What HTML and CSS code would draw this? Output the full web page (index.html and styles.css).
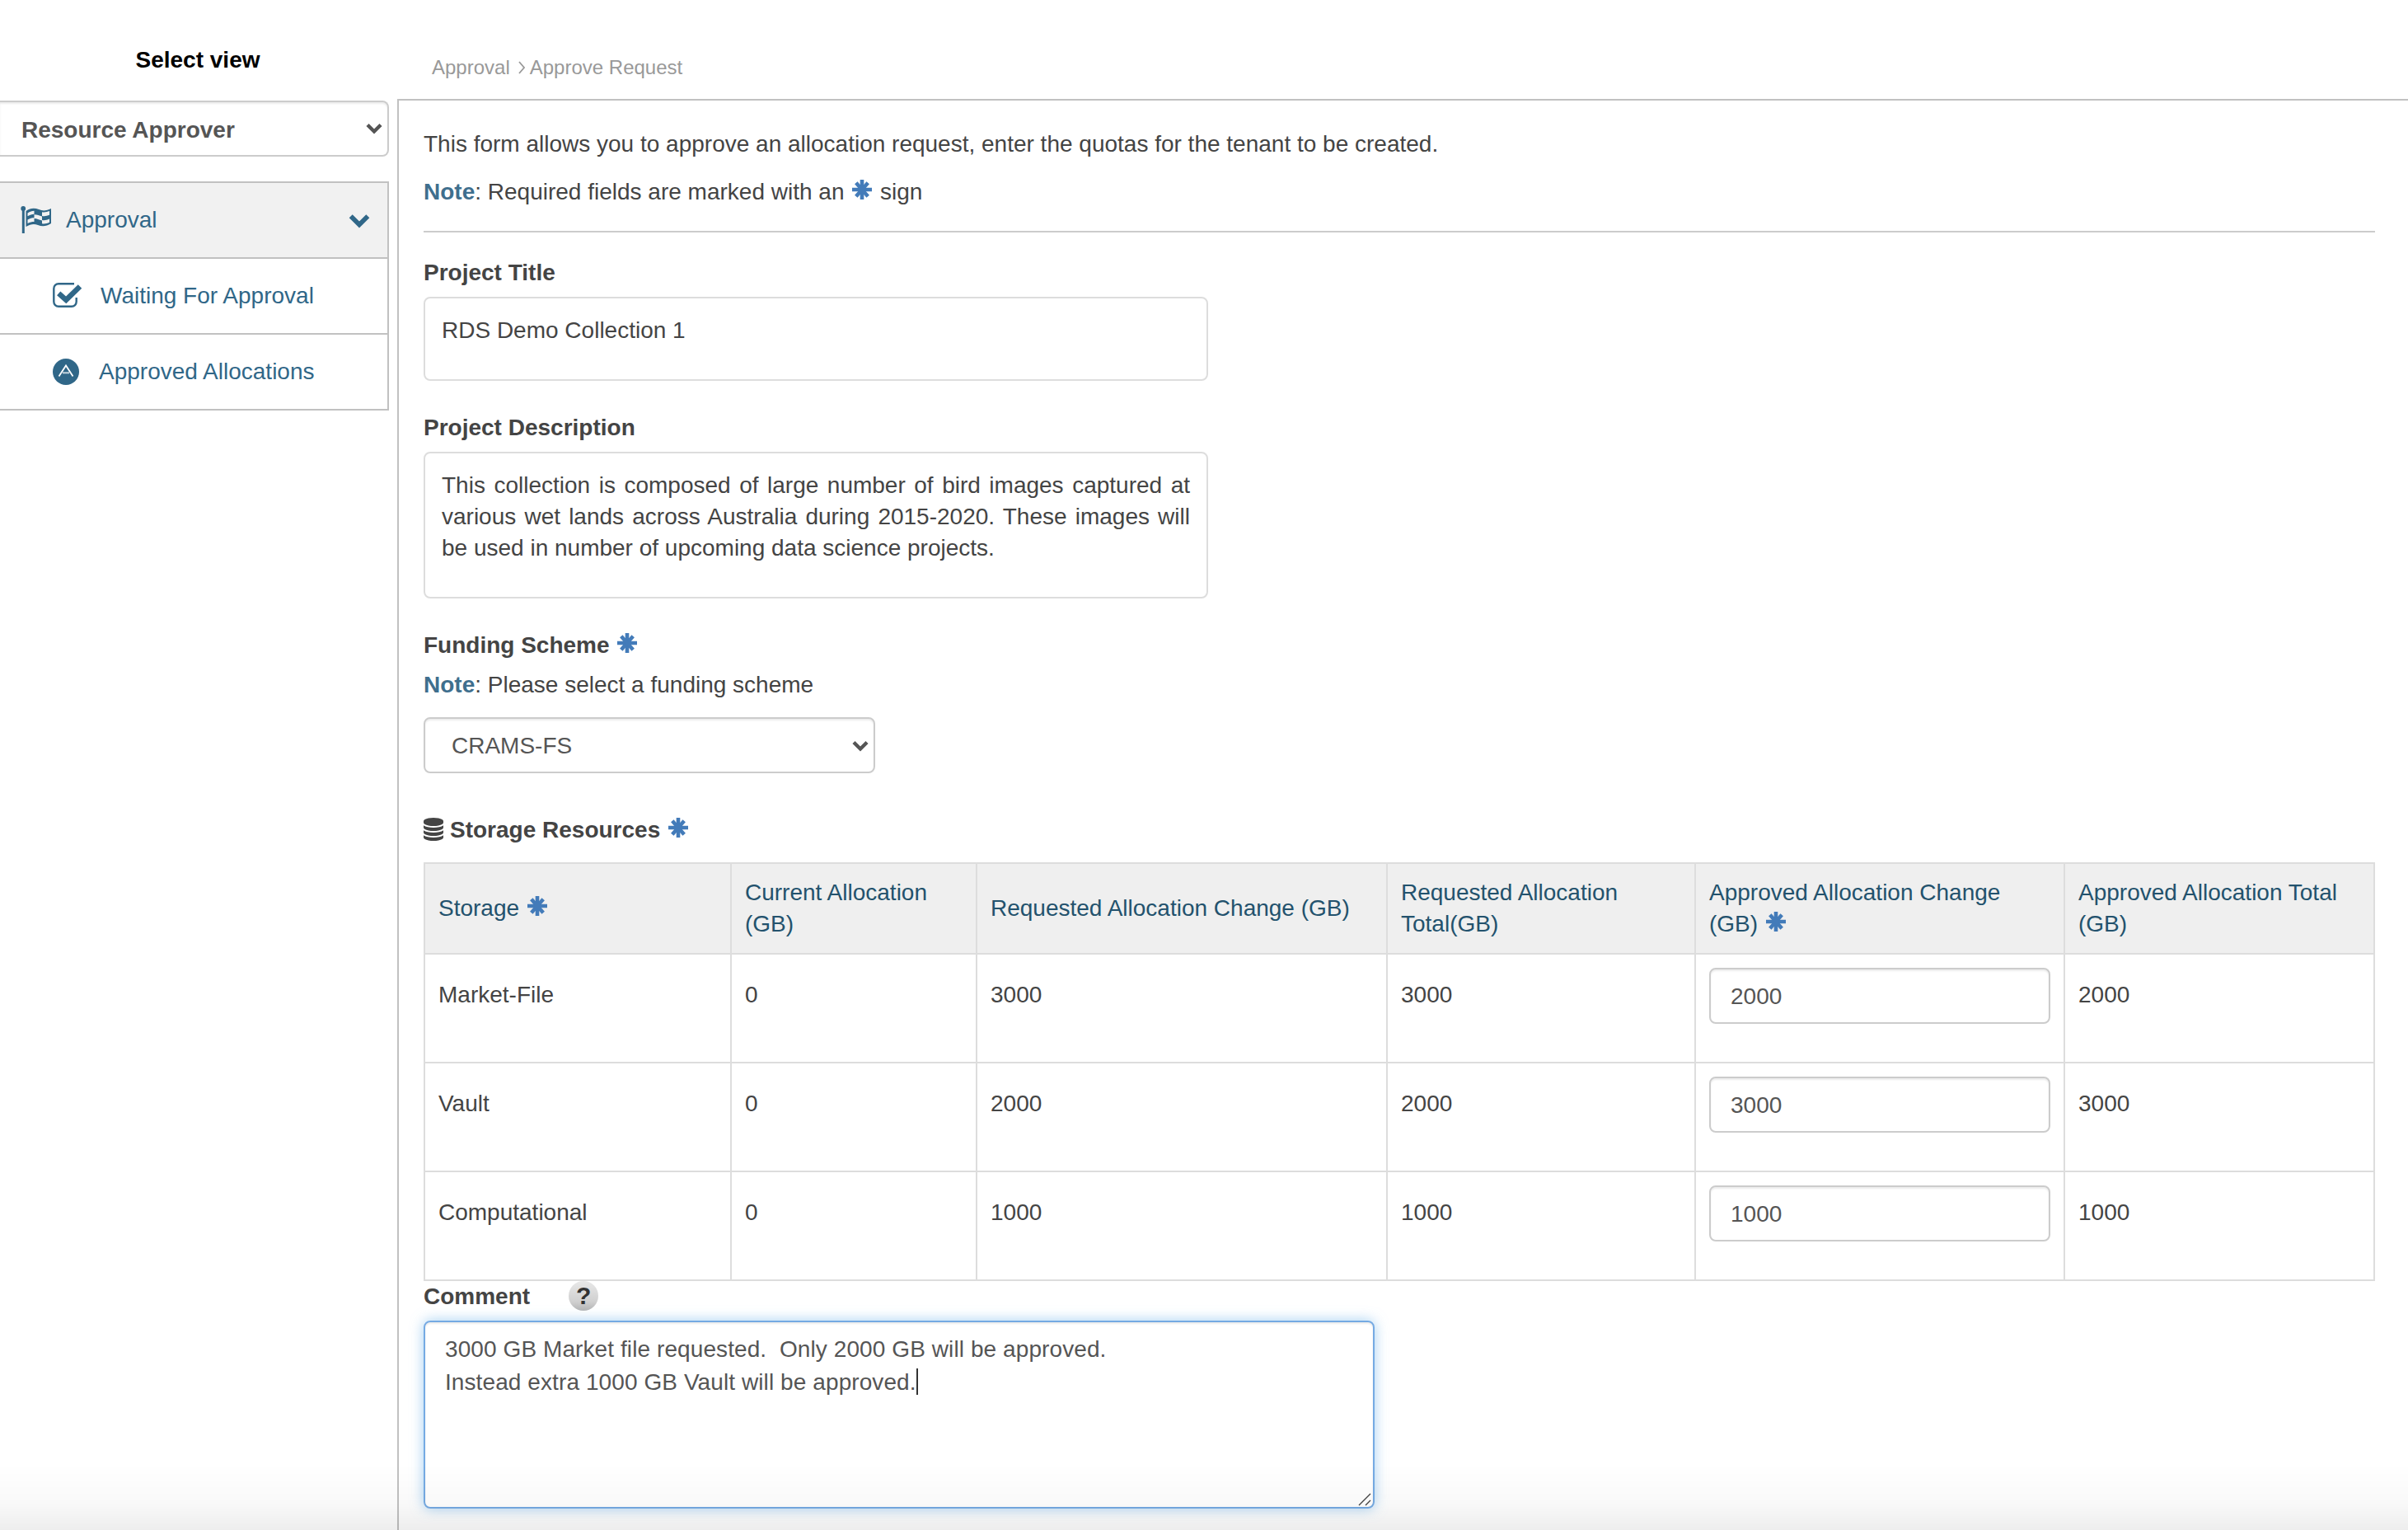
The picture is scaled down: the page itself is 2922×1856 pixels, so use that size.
FILE: index.html
```html
<!DOCTYPE html>
<html>
<head>
<meta charset="utf-8">
<title>Approve Request</title>
<link rel="stylesheet" href="styles.css">
</head>

<body>
<!-- icons -->
<svg class="defs">
	<symbol id="i-star" viewBox="0 0 24 24">
		<path d="M12 0v24M0 12h24" stroke-width="4.6"/>
		<path d="M4.800 3.800l14.400 16.400M19.200 3.800L4.800 20.200" stroke-width="4.600"/>
	</symbol>
	<symbol id="i-down" viewBox="0 0 20 14">
		<path d="M2 2.5l8 8 8-8" fill="none" stroke="currentColor" stroke-width="4.4"/>
	</symbol>
	<symbol id="i-flag" viewBox="0 0 38 34">
		<circle cx="3.2" cy="3" r="2.9"/>
		<rect x="1.8" y="3" width="3" height="30"/>
		<path d="M6.5 6C12 2 17 2 22 4c5 2 9 2 15-1v18c-6 4-11 4-16 2-5-2-9-1-14.500 2z"/>
		<path d="M8.500 8.500c3-2 5-2.700 8-2.800v4c-3 .2-5 .8-8 2.600zM16.500 10.200c4 0 6 1.500 9.500 2.300v5c-4-.8-6-2.300-9.500-2.500zM26 7.300c3 .5 6 0 9-1.300v4.800c-3 1.400-6 1.700-9 1.200zM8.500 16.500c3-1.600 5-2.200 8-2.200v4.600c-3 0-5 .6-8 2zM26 17c3 .5 6 0 9-1.500v4.300c-3 1.500-6 2-9 1.500z" fill="#f1f1f1"/>
	</symbol>
	<symbol id="i-check" viewBox="0 0 36 30">
		<path d="M26 1.300H7A5.700 5.700 0 0 0 1.300 7v16A5.700 5.700 0 0 0 7 28.700h16a5.700 5.700 0 0 0 5.700-5.700v-5" fill="none" stroke="currentColor" stroke-width="2.400"/>
		<path d="M7.200 12.800l9 8L33 4.500" fill="none" stroke="currentColor" stroke-width="6.400"/>
	</symbol>
	<symbol id="i-badge" viewBox="0 0 32 32">
		<circle cx="16" cy="16" r="16"/>
		<path d="M7.500 21.500L16 8.500l8.500 13" fill="none" stroke="#fff" stroke-width="1.800"/>
		<path d="M12 17.300h8" stroke="#c5d5df" stroke-width="2"/>
	</symbol>
	<symbol id="i-db" viewBox="0 0 1536 1792">
		<path d="M768 768q237 0 443-43t325-127v170q0 69-103 128t-280 93.500-385 34.500-385-34.500-280-93.500-103-128v-170q119 84 325 127t443 43zm0 768q237 0 443-43t325-127v170q0 69-103 128t-280 93.500-385 34.500-385-34.500-280-93.500-103-128v-170q119 84 325 127t443 43zm0-384q237 0 443-43t325-127v170q0 69-103 128t-280 93.500-385 34.500-385-34.500-280-93.500-103-128v-170q119 84 325 127t443 43zm0-1152q208 0 385 34.500t280 93.500 103 128v128q0 69-103 128t-280 93.500-385 34.500-385-34.500-280-93.500-103-128v-128q0-69 103-128t280-93.500 385-34.500z"/>
	</symbol>
</svg>

<div class="page">
	<div class="sidebar">
		<h4>Select view</h4>
		<div class="select view-select">Resource Approver <svg class="arrow"><use href="#i-down"/></svg></div>
		<ul class="menu">
			<li class="menu-head"><svg class="flag"><use href="#i-flag"/></svg><a>Approval</a><svg class="toggle"><use href="#i-down"/></svg></li>
			<li><svg class="check"><use href="#i-check"/></svg><a>Waiting For Approval</a></li>
			<li><svg class="badge"><use href="#i-badge"/></svg><a>Approved Allocations</a></li>
		</ul>
	</div>

	<div class="main">
		<div class="breadcrumb"><span>Approval</span><svg viewBox="0 0 8 16"><path d="M1 1l6 7-6 7"/></svg><span>Approve Request</span></div>
		<div class="content">
			<p>This form allows you to approve an allocation request, enter the quotas for the tenant to be created.</p>
			<p><b class="note">Note</b>: Required fields are marked with an <svg class="star"><use href="#i-star"/></svg> sign</p>
			<hr>

			<label>Project Title</label>
			<div class="box">RDS Demo Collection 1</div>

			<label>Project Description</label>
			<div class="box">This collection is composed of large number of bird images captured at various wet lands across Australia during 2015-2020. These images will be used in number of upcoming data science projects.</div>

			<label>Funding Scheme <svg class="star"><use href="#i-star"/></svg></label>
			<div class="hint"><b class="note">Note</b>: Please select a funding scheme</div>
			<div class="select funding">CRAMS-FS <svg class="arrow"><use href="#i-down"/></svg></div>

			<label class="storage"><svg class="db"><use href="#i-db"/></svg>Storage Resources <svg class="star"><use href="#i-star"/></svg></label>
			<table>
				<colgroup><col class="c1"><col class="c2"><col class="c3"><col class="c4"><col class="c5"><col class="c6"></colgroup>
				<tr>
					<th>Storage <svg class="star"><use href="#i-star"/></svg></th>
					<th>Current Allocation (GB)</th>
					<th>Requested Allocation Change (GB)</th>
					<th>Requested Allocation Total(GB)</th>
					<th>Approved Allocation Change (GB) <svg class="star"><use href="#i-star"/></svg></th>
					<th>Approved Allocation Total (GB)</th>
				</tr>
				<tr>
					<td>Market-File</td>
					<td>0</td>
					<td>3000</td>
					<td>3000</td>
					<td class="edit"><input type="text" value="2000"></td>
					<td>2000</td>
				</tr>
				<tr>
					<td>Vault</td>
					<td>0</td>
					<td>2000</td>
					<td>2000</td>
					<td class="edit"><input type="text" value="3000"></td>
					<td>3000</td>
				</tr>
				<tr>
					<td>Computational</td>
					<td>0</td>
					<td>1000</td>
					<td>1000</td>
					<td class="edit"><input type="text" value="1000"></td>
					<td>1000</td>
				</tr>
			</table>

			<label class="comment-label">Comment <span class="help">?</span></label>
			<div class="comment">3000 GB Market file requested.  Only 2000 GB will be approved.
Instead extra 1000 GB Vault will be approved.<i class="caret"></i><svg class="grip" viewBox="0 0 16 16"><path d="M1 15L15 1M9 15l6-6"/></svg></div>
		</div>
	</div>
</div>
<div class="fade"></div>
</body>
</html>
```
FILE: styles.css
```css
*{box-sizing:border-box;}
body{
	margin:0;
	height:1856px;
	overflow:hidden;
	background:#fff;
	color:#444;
	font:28px/38px "Helvetica Neue", "Liberation Sans", Arial, sans-serif;
}
svg{fill:currentColor;}
.defs{display:none;}
.page{display:flex; height:1856px;}

/* left menu */
.sidebar{width:472px; margin-right:10px; flex:none;}
.sidebar h4{
	margin:54px 0 30px;
	padding-left:8px;
	font-size:28px;
	line-height:38px;
	text-align:center;
	color:#000;
}
.select{
	display:flex;
	align-items:center;
	justify-content:space-between;
	height:68px;
	border:2px solid #ccc;
	border-radius:8px;
	box-shadow:inset 0 2px 2px rgba(0,0,0,.075);
	color:#555;
}
.arrow{width:20px; height:14px;}
.view-select{
	padding:4px 6px 0 26px;
	border-left:0;
	border-radius:0 8px 8px 0;
	font-weight:bold;
}
.view-select .arrow{margin-bottom:5px;}
.menu{
	list-style:none;
	margin:30px 0 0;
	padding:0;
	border:2px solid #c1c1c1;
	border-width:2px 2px 0 0;
	color:#306788;
}
.menu li{
	display:flex;
	align-items:center;
	height:92px;
	padding-left:64px;
	border-bottom:2px solid #c1c1c1;
}
.menu .menu-head{padding:0 21px 0 25px; background:#f1f1f1;}
.flag{width:38px; height:34px; margin-right:17px;}
.toggle{width:26px; height:18px; margin:2px 0 0 auto;}
.check{width:36px; height:30px; margin:0 22px 2px 0;}
.badge{width:32px; height:32px; margin-right:24px;}

/* right side */
.main{flex:1; display:flex; flex-direction:column;}
.breadcrumb{
	display:flex;
	align-items:center;
	height:120px;
	padding:44px 0 0 42px;
	font-size:24px;
	color:#999;
}
.breadcrumb svg{width:8px; height:16px; margin:0 6px 0 10px; fill:none; stroke:#999; stroke-width:1.8;}
.content{
	flex:1;
	padding:34px 40px 0 30px;
	border:2px solid #c1c1c1;
	border-width:2px 0 0 2px;
}
p{margin:0 0 20px;}
.note{color:#3f6f8e;}
hr{margin:28px 0 30px; border:0; border-top:2px solid #ccc;}
label{display:block; margin-bottom:10px; font-weight:bold;}
.star{width:24px; height:24px; margin:0 2px; stroke:#437bb9;}
.box{
	width:952px;
	margin-bottom:38px;
	padding:20px 20px 40px;
	border:2px solid #ddd;
	border-radius:8px;
	text-align:justify;
}
.hint{margin-bottom:20px;}
.funding{width:548px; margin-bottom:50px; padding:2px 6px 0 32px;}
.storage{margin-bottom:20px;}
.db{width:24px; height:28px; margin-right:8px; vertical-align:-4px;}

table{
	width:2368px;
	table-layout:fixed;
	border-collapse:collapse;
}
.c1{width:372px;}
.c2{width:298px;}
.c3{width:498px;}
.c4{width:374px;}
.c5{width:448px;}
.c6{width:376px;}
th, td{border:2px solid #ddd; text-align:left;}
th{
	height:110px;
	padding:0 16px 1px;
	background:#efefef;
	color:#23526d;
	font-weight:normal;
}
td{height:132px; padding:30px 16px 0; vertical-align:top;}
td.edit{padding:16px 16px 0;}
input{
	display:block;
	width:414px;
	height:68px;
	padding:2px 24px 0;
	border:2px solid #ccc;
	border-radius:8px;
	box-shadow:inset 0 2px 2px rgba(0,0,0,.075);
	font:inherit;
	color:#555;
}

.comment-label{display:flex;}
.help{
	width:36px;
	height:36px;
	margin:0 0 2px 47px;
	border-radius:50%;
	background:linear-gradient(#e8e8e8, #d0d0d0 70%, #b4b4b4);
	color:#333;
	font-size:30px;
	line-height:36px;
	text-align:center;
}
.comment{
	position:relative;
	width:1154px;
	height:228px;
	padding:13px 24px;
	border:2px solid #75aae3;
	border-radius:8px;
	box-shadow:inset 0 2px 2px rgba(0,0,0,.075), 0 0 16px rgba(102,175,233,.6);
	color:#555;
	line-height:40px;
	letter-spacing:.09px;
	white-space:pre-wrap;
}
.caret{display:inline-block; width:2px; height:32px; background:#333; vertical-align:-6px;}
.grip{position:absolute; right:2px; bottom:1px; width:16px; height:16px; stroke:#444; stroke-width:1.4;}
/* shade at the bottom of the window */
.fade{
	position:fixed;
	left:0;
	right:0;
	bottom:0;
	height:80px;
	background:linear-gradient(rgba(0,0,0,0), rgba(0,0,0,.025) 60%, rgba(0,0,0,.07));
}
```
